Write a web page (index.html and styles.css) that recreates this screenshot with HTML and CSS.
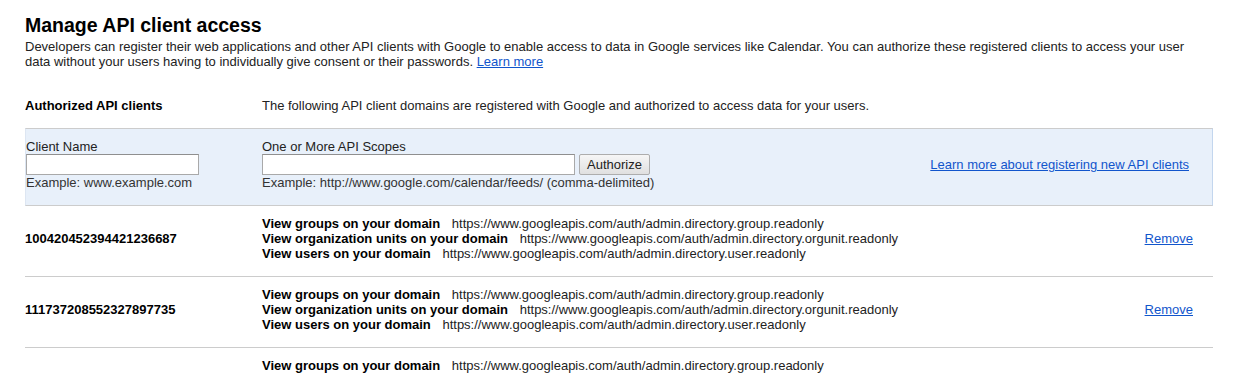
FILE: index.html
```html
<!DOCTYPE html>
<html lang="en">
<head>
    <meta charset="UTF-8">
    <title>Manage API client access</title>
    <link rel="stylesheet" href="styles.css">
</head>
<body>
    <div class="page">
        <h1>Manage API client access</h1>
        <p class="intro">Developers can register their web applications and other API clients with Google to enable access to data in Google services like Calendar. You can authorize these registered clients to access your user data without your users having to individually give consent or their passwords. <a href="#">Learn more</a></p>

        <div class="section-head">
            <div class="section-title">Authorized API clients</div>
            <div>The following API client domains are registered with Google and authorized to access data for your users.</div>
        </div>

        <div class="add-box">
            <div class="field">
                <label for="clientName">Client Name</label>
                <input type="text" id="clientName" class="name-input">
                <div class="hint">Example: www.example.com</div>
            </div>
            <div class="field">
                <label for="scopes">One or More API Scopes</label>
                <div class="scope-line">
                    <input type="text" id="scopes" class="scope-input">
                    <button class="auth-btn">Authorize</button>
                </div>
                <div class="hint">Example: http://www.google.com/calendar/feeds/ (comma-delimited)</div>
            </div>
            <div class="side">
                <a href="#">Learn more about registering new API clients</a>
            </div>
        </div>

        <div class="client-row">
            <div class="client-id">100420452394421236687</div>
            <div class="scopes">
                <div><b>View groups on your domain</b> https://www.googleapis.com/auth/admin.directory.group.readonly</div>
                <div><b>View organization units on your domain</b> https://www.googleapis.com/auth/admin.directory.orgunit.readonly</div>
                <div><b>View users on your domain</b> https://www.googleapis.com/auth/admin.directory.user.readonly</div>
            </div>
            <div class="side"><a href="#">Remove</a></div>
        </div>

        <div class="client-row">
            <div class="client-id">111737208552327897735</div>
            <div class="scopes">
                <div><b>View groups on your domain</b> https://www.googleapis.com/auth/admin.directory.group.readonly</div>
                <div><b>View organization units on your domain</b> https://www.googleapis.com/auth/admin.directory.orgunit.readonly</div>
                <div><b>View users on your domain</b> https://www.googleapis.com/auth/admin.directory.user.readonly</div>
            </div>
            <div class="side"><a href="#">Remove</a></div>
        </div>

        <div class="client-row">
            <div class="client-id">104815583610283749612</div>
            <div class="scopes">
                <div><b>View groups on your domain</b> https://www.googleapis.com/auth/admin.directory.group.readonly</div>
                <div><b>View organization units on your domain</b> https://www.googleapis.com/auth/admin.directory.orgunit.readonly</div>
                <div><b>View users on your domain</b> https://www.googleapis.com/auth/admin.directory.user.readonly</div>
            </div>
            <div class="side"><a href="#">Remove</a></div>
        </div>
    </div>
</body>
</html>
```

FILE: styles.css
```css
body {
    margin: 0;
    font-family: "Liberation Sans", Arial, sans-serif;
    font-size: 13px;
    line-height: 15px;
    color: #222;
    background-color: white;
}
a {
    color: #15c;
}
.page {
    width: 1188px;
    padding: 13px 0 0 25px;
}
h1 {
    margin: 0;
    font-size: 19.5px;
    line-height: 24px;
    color: #000;
}
.intro {
    max-width: 1175px;
    margin: 2px 0 0 0;
}
.section-head {
    display: grid;
    grid-template-columns: 237px 1fr;
    margin-top: 29px;
}
.section-title {
    font-weight: bold;
    color: #000;
}
.add-box {
    display: grid;
    grid-template-columns: 236px 1fr auto;
    align-items: start;
    margin-top: 15px;
    padding: 10px 0 15px 0;
    background-color: #e8f0fa;
    border: 1px solid #ccc;
    border-left-color: #dde6f2;
    border-right-color: #c3d6ee;
}
.field label {
    display: block;
}
.field input {
    height: 21px;
    box-sizing: border-box;
    margin: 0;
    border: 1px solid #a9a9a9;
    border-top-color: #8f8f8f;
    background: white;
}
.name-input {
    width: 173px;
}
.scope-line {
    display: flex;
    gap: 4px;
}
.scope-input {
    width: 313px;
}
.auth-btn {
    height: 21px;
    padding: 0 7px;
    font-family: "Liberation Sans", Arial, sans-serif;
    font-size: 13px;
    color: #222;
    background: linear-gradient(#f6f6f6, #e0e0e0);
    border: 1px solid #adadad;
    border-radius: 2px;
}
.hint {
    color: #333;
}
.side {
    align-self: center;
    padding-right: 23px;
    text-align: right;
}
.client-row {
    display: grid;
    grid-template-columns: 237px 1fr auto;
    align-items: center;
    padding: 10px 0 15px 0;
    border-bottom: 1px solid #ccc;
}
.client-id {
    font-weight: bold;
    color: #000;
}
.scopes b {
    margin-right: 8px;
    color: #000;
}
.client-row .side {
    padding-right: 20px;
}
```
